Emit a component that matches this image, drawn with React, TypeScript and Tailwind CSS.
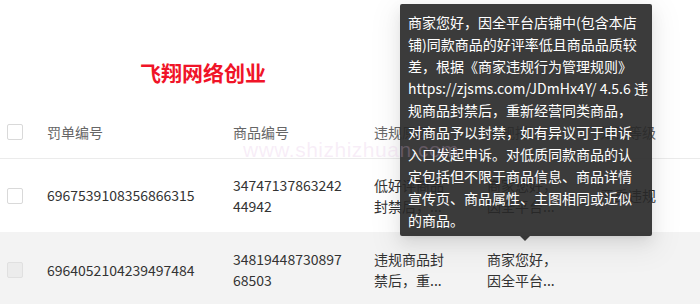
import React from "react";

const font = { fontFamily: '"Noto Sans CJK SC", "Noto Sans", sans-serif' };

function Checkbox({ disabled }: { disabled?: boolean }) {
  return (
    <div
      className={
        "w-4 h-4 rounded-[2px] border " +
        (disabled ? "border-[#e0e0e0] bg-[#ececec]" : "border-[#d9d9d9] bg-white")
      }
    />
  );
}

const tipLines = [
  "商家您好，因全平台店铺中(包含本店",
  "铺)同款商品的好评率低且商品品质较",
  "差，根据《商家违规行为管理规则》",
  "https://zjsms.com/JDmHx4Y/ 4.5.6 违",
  "规商品封禁后，重新经营同类商品，",
  "对商品予以封禁，如有异议可于申诉",
  "入口发起申诉。对低质同款商品的认",
  "定包括但不限于商品信息、商品详情",
  "宣传页、商品属性、主图相同或近似",
  "的商品。",
];

export default function App() {
  return (
    <div className="relative w-[700px] h-[304px] overflow-hidden bg-white" style={font}>
      <div className="h-[106px] pt-[59px] pl-[140px]">
        <div className="text-[21px] leading-[26px] font-bold text-[#f01428] tracking-[0px]">
          飞翔网络创业
        </div>
      </div>

      {/* header */}
      <div className="flex items-center h-[53px] border-b border-[#ebebeb] text-[14px] text-[#666]">
        <div className="w-[47px] pl-[7px]">
          <Checkbox />
        </div>
        <div className="w-[186px]">罚单编号</div>
        <div className="w-[141px]">商品编号</div>
        <div className="w-[113px]">违规原因</div>
        <div className="w-[113px]">违规描述</div>
        <div className="flex-1 pl-[0px]">处罚等级</div>
      </div>

      {/* row 1 */}
      <div className="flex items-center h-[73px] bg-white text-[14px] text-[#333] leading-[21px]">
        <div className="w-[47px] pl-[7px]">
          <Checkbox />
        </div>
        <div className="w-[186px]">6967539108356866315</div>
        <div className="w-[141px]">
          <div>34747137863242</div>
          <div>44942</div>
        </div>
        <div className="w-[113px]">
          <div>低好评商品</div>
          <div>封禁后，...</div>
        </div>
        <div className="w-[113px]">
          <div>商家您好，</div>
          <div>因全平台...</div>
        </div>
        <div className="flex-1">严重违规</div>
      </div>

      {/* row 2 */}
      <div className="flex items-center h-[76px] bg-[#f3f3f3] text-[14px] text-[#333] leading-[21px]">
        <div className="w-[47px] pl-[7px]">
          <Checkbox disabled />
        </div>
        <div className="w-[186px]">6964052104239497484</div>
        <div className="w-[141px]">
          <div>34819448730897</div>
          <div>68503</div>
        </div>
        <div className="w-[113px]">
          <div>违规商品封</div>
          <div>禁后，重...</div>
        </div>
        <div className="w-[113px]">
          <div>商家您好，</div>
          <div>因全平台...</div>
        </div>
        <div className="flex-1"></div>
      </div>

      {/* tooltip */}
      <div className="absolute left-[400px] top-[4px] w-[252px]">
        <div className="bg-[rgba(40,40,40,0.91)] rounded-[2px] pt-[7px] pb-[5px] pl-[8px] pr-[6px] text-[14px] leading-[22px] text-white shadow-[0_3px_6px_-4px_rgba(0,0,0,0.12),0_6px_16px_0_rgba(0,0,0,0.08),0_9px_28px_8px_rgba(0,0,0,0.05)]">
          {tipLines.map((l, i) => (
            <div key={i} className="whitespace-nowrap">
              {l}
            </div>
          ))}
        </div>
        <div className="absolute left-[120px] top-full w-0 h-0 border-l-[5px] border-r-[5px] border-t-[5px] border-l-transparent border-r-transparent border-t-[rgba(40,40,40,0.91)]" />
      </div>

      {/* watermark */}
      <div className="absolute left-[243px] top-[136px] text-[21px] leading-[28px] tracking-[0.5px] text-[rgba(225,185,225,0.25)] pointer-events-none whitespace-nowrap" style={{ fontFamily: '"Liberation Sans", sans-serif' }}>
        www.shizhizhuan.com
      </div>
    </div>
  );
}
